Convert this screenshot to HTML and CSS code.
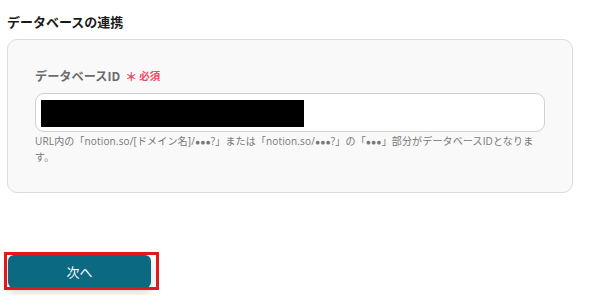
FILE: index.html
```html
<!DOCTYPE html>
<html lang="ja">
<head>
<meta charset="utf-8">
<link rel="stylesheet" href="styles.css">
</head>
<body>
<div class="page">
  <h2 class="title">データベースの連携</h2>
  <div class="card">
    <div class="label">データベースID<span class="req"><span class="star">＊</span>必須</span></div>
    <div class="input"><div class="redact"></div></div>
    <p class="help">URL内の「notion.so/[ドメイン名]/<span class="dots">●●●</span>?」または「notion.so/<span class="dots">●●●</span>?」の「<span class="dots">●●●</span>」部分がデータベースIDとなります。</p>
  </div>
  <div class="actions">
    <button class="next">次へ</button>
    <div class="highlight"></div>
  </div>
</div>
</body>
</html>
```
FILE: styles.css
```css
* { box-sizing: border-box; }
html, body { margin: 0; padding: 0; background: #fff; }
body { font-family: "Noto Sans CJK JP", "Noto Sans", sans-serif; color: #333; }
.page { padding: 13px 36px 0 7px; width: 609px; }
.title { margin: 0; font-size: 13px; font-weight: 700; line-height: 18px; color: #1a1a1a; height: 26px; }
.card {
  width: 566px;
  height: 154px;
  border: 1px solid #dcdcdc;
  border-radius: 10px;
  background: #f9f9f9;
  padding: 27px 27px 0 27px;
}
.label { font-size: 12.2px; font-weight: 700; color: #6b6b6b; line-height: 18px; display: flex; align-items: center; }
.req { color: #f04a64; font-size: 10.5px; font-weight: 700; margin-left: 5px; display: flex; align-items: center; }
.star { font-size: 12px; margin-right: 2px; position: relative; top: 1px; }
.input {
  margin-top: 8px;
  height: 39px;
  background: #fff;
  border: 1px solid #cfcfd6;
  border-radius: 9px;
  padding: 6px 5px;
}
.redact { width: 263px; height: 27px; background: #000; }
.help { margin: 2px 0 0 0; font-family: "Open Sans", "Noto Sans CJK JP", sans-serif; font-size: 10px; letter-spacing: 0.15px; line-height: 15px; color: #777; padding-right: 0; }
.dots { font-family: "Liberation Sans", sans-serif; font-size: 8.5px; }
.actions { position: relative; margin-top: 62px; width: 160px; height: 40px; }
.next {
  display: block;
  margin-left: 1px;
  width: 143px;
  height: 33px;
  border: 0;
  border-radius: 6px;
  background: #0b6982;
  color: #fff;
  font-family: "Noto Sans CJK JP", sans-serif;
  font-size: 13px;
  box-shadow: 0 4px 10px rgba(0,0,0,0.18);
}
.highlight {
  position: absolute;
  left: -3px;
  top: -3px;
  width: 155px;
  height: 38px;
  border: 3px solid #e0191e;
}
```
